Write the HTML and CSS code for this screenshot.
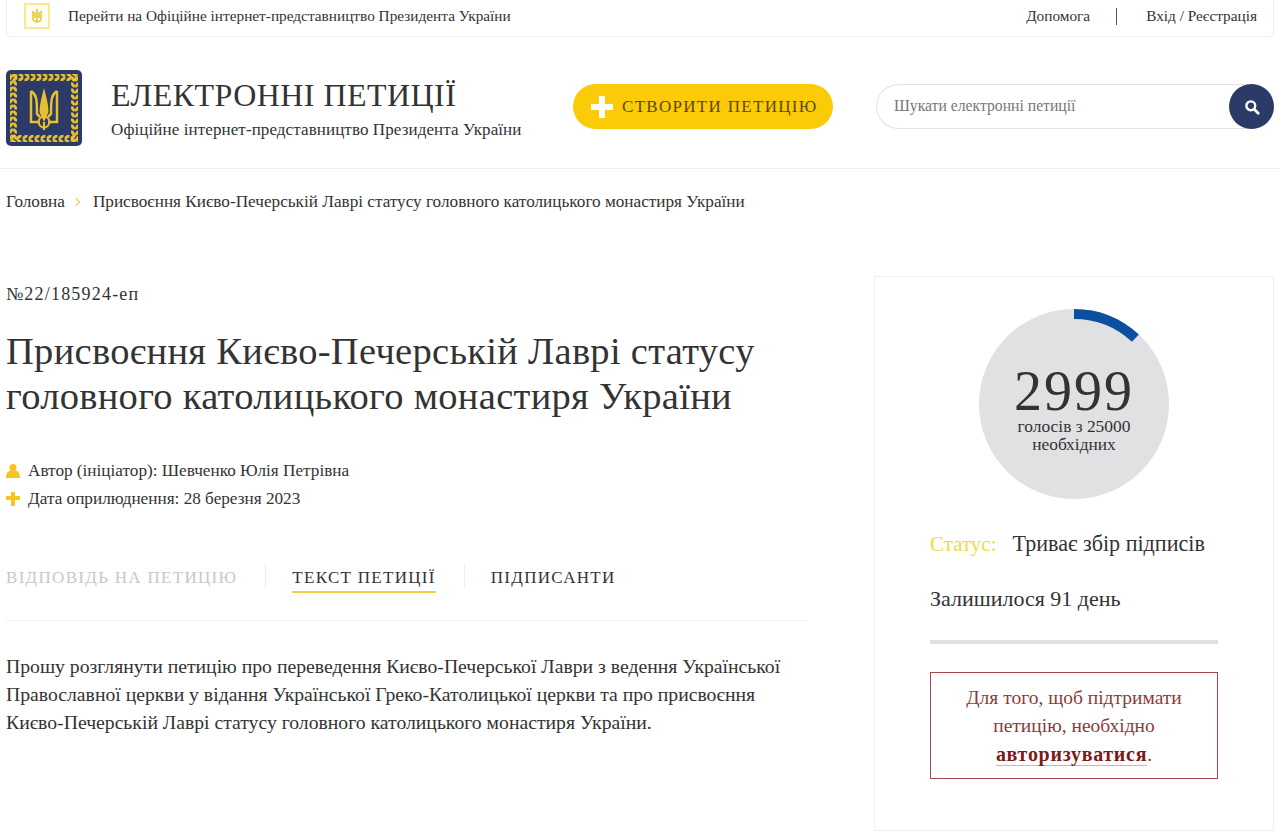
FILE: index.html
```html
<!DOCTYPE html>
<html lang="uk">
<head>
  <meta charset="UTF-8">
  <meta name="viewport" content="width=device-width, initial-scale=1.0">
  <title>Електронні петиції</title>
  <link rel="stylesheet" href="styles.css">
</head>
<body>
  <div class="topbar">
    <a class="topbar-link">
      <svg class="topbar-icon" width="26" height="26" viewBox="0 0 26 26">
        <rect x="1" y="1" width="24" height="24" fill="#fffdf0" stroke="#f3e27a" stroke-width="1.5"/>
        <path d="M13 6v13M9 8v8q0 2 4 3q4-1 4-3V8M11 9v6M15 9v6" fill="none" stroke="#e6c93c" stroke-width="1.6"/>
      </svg>
      Перейти на Офіційне інтернет-представництво Президента України
    </a>
    <div class="topbar-nav">
      <a>Допомога</a>
      <span class="topbar-sep"></span>
      <a>Вхід / Реєстрація</a>
    </div>
  </div>

  <header class="header">
    <div class="brand">
      <svg class="logo" width="76" height="76" viewBox="0 0 76 76">
        <defs>
          <pattern id="leaf" width="6" height="7" patternUnits="userSpaceOnUse">
            <ellipse cx="3" cy="2" rx="2.800" ry="1.500" transform="rotate(-30 3 2)" fill="#e8c02e"/>
            <ellipse cx="3" cy="5" rx="2.800" ry="1.500" transform="rotate(30 3 5)" fill="#e8c02e"/>
          </pattern>
          <rect id="band" x="4" y="4" width="68" height="7" fill="url(#leaf)"/>
        </defs>
        <rect width="76" height="76" rx="5" fill="#2b3a67"/>
        <use href="#band"/>
        <use href="#band" transform="rotate(90 38 38)"/>
        <use href="#band" transform="rotate(180 38 38)"/>
        <use href="#band" transform="rotate(270 38 38)"/>
        <path d="M38 18c-2 8-4.500 16-4.500 24l4.500 10 4.500-10c0-8-2.500-16-4.500-24z" fill="#e8c02e"/>
        <path d="M25 21v31h9M25 21c5.500 3 6 8 6 23l3 3M51 21v31h-9M51 21c-5.500 3-6 8-6 23l-3 3" fill="none" stroke="#e8c02e" stroke-width="2.500"/>
        <circle cx="38" cy="52" r="5.500" fill="none" stroke="#e8c02e" stroke-width="2"/>
        <path d="M38 52v8" stroke="#e8c02e" stroke-width="2.200"/>
      </svg>
      <div class="brand-text">
        <div class="brand-title">ЕЛЕКТРОННІ ПЕТИЦІЇ</div>
        <div class="brand-sub">Офіційне інтернет-представництво Президента України</div>
      </div>
    </div>
    <a class="create-btn"><span class="plus"></span>СТВОРИТИ ПЕТИЦІЮ</a>
    <form class="search">
      <input type="text" placeholder="Шукати електронні петиції">
      <button type="button" aria-label="Пошук">
        <svg width="16" height="16" viewBox="0 0 16 16">
          <circle cx="6.800" cy="6.800" r="4.400" fill="none" stroke="#fff" stroke-width="2.400"/>
          <path d="M10.200 10.200l4 4" stroke="#fff" stroke-width="2.800" stroke-linecap="round"/>
        </svg>
      </button>
    </form>
  </header>

  <nav class="breadcrumbs">
    <a>Головна</a>
    <span class="crumb-arrow"></span>
    <span>Присвоєння Києво-Печерській Лаврі статусу головного католицького монастиря України</span>
  </nav>

  <main class="page">
    <section class="petition">
      <div class="petition-number">№22/185924-еп</div>
      <h1>Присвоєння Києво-Печерській Лаврі статусу головного католицького монастиря України</h1>
      <ul class="meta">
        <li>
          <svg width="14" height="14" viewBox="0 0 14 14"><circle cx="7" cy="3.600" r="3.500" fill="#f7c51e"/><path d="M0 14q0-7 4.500-7.500h5Q14 7 14 14z" fill="#f7c51e"/></svg>
          Автор (ініціатор): Шевченко Юлія Петрівна
        </li>
        <li>
          <svg width="14" height="14" viewBox="0 0 14 14"><path d="M5 0h4v4h5v4H9v6H5V8H0V4h5z" fill="#f7c51e"/></svg>
          Дата оприлюднення: 28 березня 2023
        </li>
      </ul>
      <div class="tabs">
        <a class="tab tab-disabled">ВІДПОВІДЬ НА ПЕТИЦІЮ</a>
        <a class="tab tab-active">ТЕКСТ ПЕТИЦІЇ</a>
        <a class="tab">ПІДПИСАНТИ</a>
      </div>
      <p class="petition-text">Прошу розглянути петицію про переведення Києво-Печерської Лаври з ведення Української Православної церкви у відання Української Греко-Католицької церкви та про присвоєння Києво-Печерській Лаврі статусу головного католицького монастиря України.</p>
    </section>

    <aside class="sidebar">
      <div class="votes">
        <svg class="votes-arc" width="190" height="190" viewBox="0 0 190 190">
          <circle cx="95" cy="95" r="95" fill="#e1e1e3"/>
          <path d="M95 5A90 90 0 0 1 156.400 29.200" fill="none" stroke="#0b4f9e" stroke-width="10"/>
        </svg>
        <div class="votes-text">
          <div class="votes-count">2999</div>
          <div class="votes-label">голосів з 25000<br>необхідних</div>
        </div>
      </div>
      <div class="status"><span class="status-label">Статус:</span>Триває збір підписів</div>
      <div class="remaining">Залишилося 91 день</div>
      <div class="progress"></div>
      <div class="auth-note">Для того, щоб підтримати петицію, необхідно <a>авторизуватися</a>.</div>
    </aside>
  </main>
</body>
</html>
```

FILE: styles.css
```css
* {
  box-sizing: border-box;
}

body {
  font-family: "Liberation Serif", serif;
  color: #333;
  background-color: #fff;
  margin: 0;
  padding: 0 6px;
  height: 838px;
  overflow: hidden;
}

.topbar {
  display: flex;
  justify-content: space-between;
  align-items: center;
  height: 37px;
  padding: 0 16px 4px 17px;
  border: 1px solid #f0f0f0;
  border-top: none;
  border-radius: 0 0 4px 4px;
  font-size: 15.300px;
}

.topbar-link {
  display: flex;
  align-items: center;
  gap: 18px;
}

.topbar-nav {
  display: flex;
  align-items: center;
}

.topbar-sep {
  width: 1px;
  height: 17px;
  background-color: #555;
  margin: 0 29px 0 26px;
}

.header {
  display: flex;
  align-items: center;
  height: 132px;
  margin: 0 -6px;
  padding: 8px 6px 0;
  border-bottom: 1px solid #eee;
}

.brand {
  display: flex;
  align-items: center;
  width: 567px;
  gap: 29px;
  margin-top: 2px;
}

.brand-text {
  padding-top: 2px;
}

.brand-title {
  font-size: 32px;
  line-height: 40px;
  letter-spacing: 0.450px;
}

.brand-sub {
  font-size: 17px;
  line-height: 24px;
  margin-top: 3px;
  letter-spacing: 0.100px;
}

.create-btn {
  display: flex;
  align-items: center;
  gap: 9px;
  width: 260px;
  height: 45px;
  padding-left: 18px;
  background-color: #fccb08;
  border-radius: 23px;
  font-size: 17px;
  letter-spacing: 1.300px;
  color: #5a4a10;
}

.plus {
  position: relative;
  width: 22px;
  height: 22px;
}

.plus::before, .plus::after {
  content: "";
  position: absolute;
  background-color: #fff;
}

.plus::before {
  left: 8px;
  top: 0;
  width: 6px;
  height: 22px;
}

.plus::after {
  left: 0;
  top: 8px;
  width: 22px;
  height: 6px;
}

.search {
  display: flex;
  width: 398px;
  height: 45px;
  margin-left: 43px;
  border: 1px solid #e2e2e2;
  border-right: none;
  border-radius: 23px;
}

.search input {
  flex: 1;
  min-width: 0;
  padding: 0 0 2px 17px;
  border: none;
  background: transparent;
  outline: none;
  font-family: "Liberation Serif", serif;
  font-size: 15.700px;
}

.search input::placeholder {
  color: #777;
}

.search button {
  display: flex;
  align-items: center;
  justify-content: center;
  width: 45px;
  height: 45px;
  margin-top: -1px;
  padding: 0;
  border: none;
  border-radius: 50%;
  background-color: #2b3a67;
}

.breadcrumbs {
  display: flex;
  align-items: center;
  height: 65px;
  font-size: 17.200px;
}

.crumb-arrow {
  width: 6px;
  height: 6px;
  margin: 0 14px 0 8px;
  border-top: 1px solid #f2c73a;
  border-right: 1px solid #f2c73a;
  transform: rotate(45deg);
}

.page {
  display: flex;
  justify-content: space-between;
  align-items: flex-start;
  margin-top: 42px;
}

.petition {
  width: 802px;
}

.petition-number {
  font-size: 18px;
  line-height: 24px;
  margin-top: 6px;
  letter-spacing: 1.200px;
}

h1 {
  font-size: 38.500px;
  font-weight: normal;
  line-height: 45px;
  letter-spacing: 0.300px;
  margin: 23px 0 0;
}

.meta {
  list-style: none;
  margin: 38px 0 0;
  padding: 0;
  font-size: 17.200px;
  line-height: 28px;
}

.meta li {
  display: flex;
  align-items: center;
  gap: 8px;
}

.tabs {
  display: flex;
  align-items: center;
  height: 63px;
  margin-top: 45px;
  padding-bottom: 24px;
  border-bottom: 1px solid #f1f1f1;
  font-size: 17px;
  letter-spacing: 1.300px;
}

.tab {
  display: block;
  line-height: 27px;
  border-bottom: 2px solid transparent;
  margin-top: 2px;
}

.tab + .tab {
  margin-left: 55px;
  position: relative;
}

.tab + .tab::before {
  content: "";
  position: absolute;
  left: -27px;
  top: 0;
  height: 24px;
  width: 1px;
  background-color: #eee;
}

.tab-disabled {
  color: #c8c8c8;
}

.tab-active {
  border-bottom-color: #f2cf3c;
}

.petition-text {
  font-size: 19.700px;
  line-height: 28px;
  margin: 31px 0 0;
}

.sidebar {
  width: 400px;
  height: 555px;
  padding: 32px 55px 0 55px;
  border: 1px solid #f0f0f0;
}

.votes {
  position: relative;
  width: 190px;
  height: 190px;
  margin: 0 auto;
}

.votes-arc {
  display: block;
}

.votes-text {
  position: absolute;
  left: 0;
  right: 0;
  top: 57px;
  text-align: center;
}

.votes-count {
  font-size: 56px;
  line-height: 50px;
  letter-spacing: 2px;
}

.votes-label {
  font-size: 17.400px;
  line-height: 18px;
  margin-top: 1px;
}

.status {
  font-size: 22.100px;
  line-height: 28px;
  margin-top: 31px;
}

.status-label {
  color: #f2d93c;
  font-size: 21px;
  margin-right: 16px;
}

.remaining {
  font-size: 22px;
  line-height: 28px;
  margin-top: 27px;
}

.progress {
  height: 4px;
  margin-top: 27px;
  background-color: #e1e1e3;
}

.auth-note {
  height: 107px;
  margin-top: 28px;
  padding: 11px 20px 0;
  border: 1px solid #a8474d;
  color: #8f3a3a;
  font-size: 19.500px;
  line-height: 28px;
  text-align: center;
}

.auth-note a {
  font-size: 20px;
  font-weight: bold;
  letter-spacing: 0.700px;
  color: #7c1a1a;
  border-bottom: 1px solid #bbb;
}
```
